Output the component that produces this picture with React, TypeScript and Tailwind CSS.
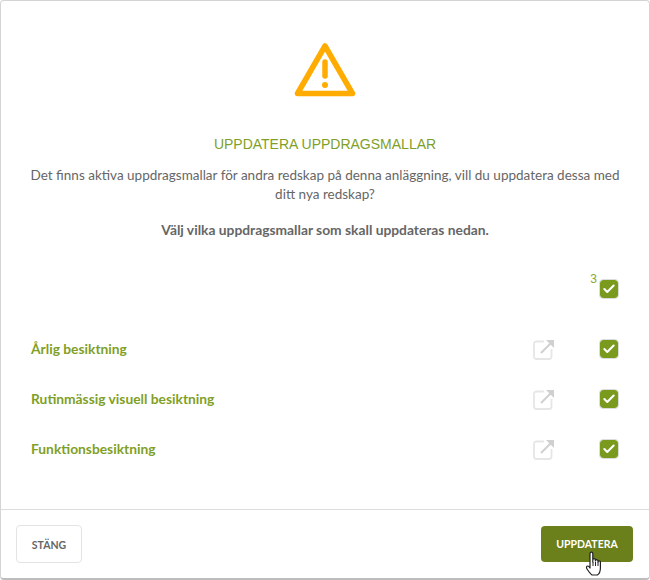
import { Check } from "lucide-react";

const templates = ["Årlig besiktning", "Rutinmässig visuell besiktning", "Funktionsbesiktning"];

function TemplateCheck() {
  return (
    <div className="flex h-[18px] w-[18px] items-center justify-center rounded-[3px] bg-[#7a9a1e] outline outline-1 outline-[#dcdcdc]">
      <Check size={14} strokeWidth={3.5} className="text-white" />
    </div>
  );
}

function OpenIcon() {
  return (
    <svg width="22" height="21" viewBox="0 0 22 21" fill="none">
      <path d="M11 2.500H3.500a2.500 2.500 0 0 0-2.500 2.500v12.500a2.500 2.500 0 0 0 2.500 2.500h12.500a2.500 2.500 0 0 0 2.500-2.500V10" stroke="#e6e6e6" strokeWidth="1.800" />
      <path d="M8 14L18 4" stroke="#d0d0d0" strokeWidth="2" />
      <path d="M13 1H21V9Z" fill="#d0d0d0" />
    </svg>
  );
}

export default function App() {
  return (
    <div className="flex h-[580px] w-[650px] flex-col rounded-[4px] border border-[#d4d4d4] border-b-[2px] border-b-[#bdbdbd] bg-white font-['Lato',sans-serif] text-[#666666]">
      {/* Warning + intro */}
      <div className="flex flex-col items-center px-[25px] pt-[41px]">
        <svg width="62" height="56" viewBox="0 0 62 56" fill="none">
          <path d="M31 4L58.500 51.500H3.500Z" stroke="#ffab00" strokeWidth="5.500" strokeLinejoin="round" />
          <path d="M31 20V34" stroke="#ffab00" strokeWidth="5.500" strokeLinecap="round" />
          <circle cx="31" cy="43" r="3" fill="#ffab00" />
        </svg>
        <h1 className="mt-[38px] font-['Liberation_Sans',sans-serif] text-[14px] leading-[16px] text-[#7f9f27]">UPPDATERA UPPDRAGSMALLAR</h1>
        <p className="mt-[14px] text-center text-[13.500px] leading-[19px]">
          Det finns aktiva uppdragsmallar för andra redskap på denna anläggning, vill du uppdatera dessa med ditt nya redskap?
        </p>
        <p className="mt-[17px] text-center text-[13.800px] font-bold leading-[18px]">Välj vilka uppdragsmallar som skall uppdateras nedan.</p>
      </div>

      {/* Select all */}
      <div className="mt-[32px] flex justify-end pr-[31px]">
        <span className="mr-[3px] mt-[1px] h-[14px] font-['Liberation_Sans',sans-serif] text-[12px] leading-[14px] text-[#8aa82e]">3</span>
        <div className="mt-[9px]">
          <TemplateCheck />
        </div>
      </div>

      {/* Rows */}
      <div className="mt-[41px] flex flex-col gap-[30px] pl-[30px] pr-[31px]">
        {templates.map((t) => (
          <div key={t} className="flex h-[20px] items-center">
            <span className="flex-1 text-[13.800px] font-bold text-[#7f9f27]">{t}</span>
            <OpenIcon />
            <div className="ml-[45px]">
              <TemplateCheck />
            </div>
          </div>
        ))}
      </div>

      {/* Footer */}
      <div className="mt-auto flex h-[69px] items-center justify-between border-t border-[#dcdcdc] pl-[15px] pr-[16px]">
        <button className="h-[38px] w-[66px] rounded-[4px] border border-[#e4e4e4] bg-white pt-[3px] text-[10.500px] font-bold text-[#666666]">STÄNG</button>
        <div className="relative">
          <button className="h-[36px] w-[92px] rounded-[4px] bg-[#6b7f1a] pt-[1px] text-[10.500px] font-bold text-white">UPPDATERA</button>
          <svg className="absolute left-[44px] top-[25px]" width="18" height="26" viewBox="0 0 18 26">
            <path d="M5 2.500a1.400 1.400 0 0 1 2.800 0V11l0-2a1.300 1.300 0 0 1 2.600 0v1a1.300 1.300 0 0 1 2.600 0v1a1.200 1.200 0 0 1 2.400 0v6c0 3-1.500 6-3 7H7c-1.500-1-3-3-5-6-1-1.500-.5-3 .8-3 .8 0 1.500.8 2.200 2Z" fill="#ffffff" stroke="#222222" strokeWidth="1.200" strokeLinejoin="round" />
            <path d="M8 11v4M10.500 11v4M13 11v4" stroke="#222222" strokeWidth="1" />
          </svg>
        </div>
      </div>
    </div>
  );
}
